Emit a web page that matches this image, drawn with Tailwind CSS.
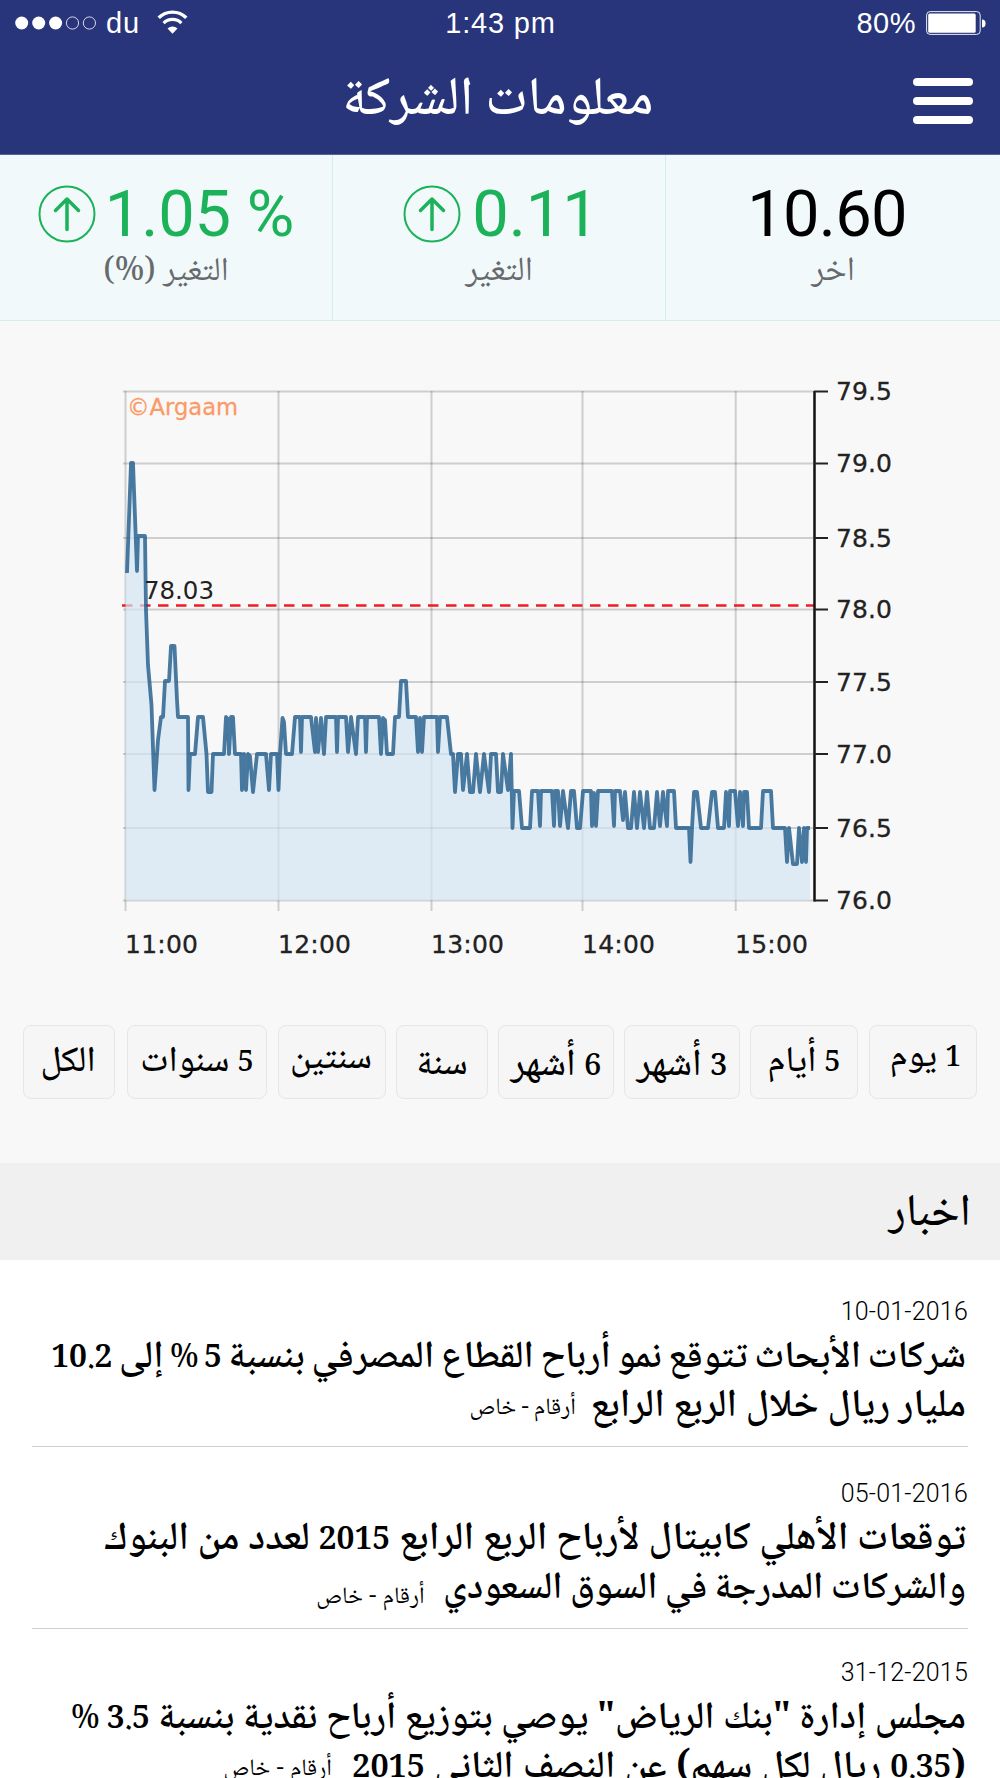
<!DOCTYPE html>
<html lang="ar">
<head>
  <meta charset="UTF-8" />
  <meta name="viewport" content="width=device-width, initial-scale=1.0"/>
  <title>معلومات الشركة</title>
  <script src="https://cdn.jsdelivr.net/npm/@tailwindcss/browser@4"></script>
</head>
<body class="bg-white">
  <div class="w-[1000px] h-[1778px] overflow-hidden bg-white font-['Noto_Naskh_Arabic','DejaVu_Sans',serif] text-black">

    <!-- Header -->
    <header class="h-[155px] bg-[#28357a] border-b border-[#5a6398] text-white">
      <div class="grid grid-cols-3 items-center h-[46px] pl-[15px] pr-[14px] font-['Liberation_Sans',sans-serif] text-[29px] leading-none">
        <div class="flex items-center">
          <svg class="w-[82px] h-[14px] -mt-[1px]" viewBox="0 0 82 14">
            <circle cx="6.7" cy="7" r="6.5" fill="#fff"/>
            <circle cx="23.7" cy="7" r="6.5" fill="#fff"/>
            <circle cx="40.6" cy="7" r="6.5" fill="#fff"/>
            <circle cx="57.5" cy="7" r="6.1" fill="none" stroke="#fff" stroke-width="0.8"/>
            <circle cx="74.4" cy="7" r="6.1" fill="none" stroke="#fff" stroke-width="0.8"/>
          </svg>
          <span class="ml-[9px] mt-[1px] tracking-[0.8px]">du</span>
          <svg class="ml-[17px] -mt-[2px] w-[31px] h-[24px]" viewBox="0 0 30 24">
            <path d="M1.2 7.800a19.500 19.500 0 0 1 27.600 0" fill="none" stroke="#fff" stroke-width="3.4"/>
            <path d="M6.1 13.100a12.700 12.700 0 0 1 17.800 0" fill="none" stroke="#fff" stroke-width="3.2"/>
            <path d="M15 23.800l-5-5.200a7.200 7.200 0 0 1 10 0z" fill="#fff"/>
          </svg>
        </div>
        <div class="text-center mt-[1px] tracking-[0.8px]">1:43 pm</div>
        <div class="flex items-center justify-end">
          <span class="mt-[1px] mr-[10px] tracking-[0.5px]">80%</span>
          <svg class="w-[60px] h-[24px] -mt-[1px]" viewBox="0 0 60 24">
            <rect x="0.6" y="0.6" width="53.6" height="22.8" rx="3.5" fill="none" stroke="#fff" stroke-width="0.9"/>
            <rect x="2.2" y="2.4" width="47.5" height="19.4" rx="1.5" fill="#fff"/>
            <path d="M56 8.500q3.600 0 3.600 4t-3.600 4z" fill="#fff"/>
          </svg>
        </div>
      </div>
      <div class="grid grid-cols-[60px_1fr_60px] items-center h-[108px] px-[27px]">
        <span></span>
        <h1 dir="rtl" class="text-[54px] leading-[60px] font-medium text-center whitespace-nowrap mt-[4px] mr-[4px]">معلومات الشركة</h1>
        <div class="flex flex-col gap-[11px] items-end mt-[2px]">
          <span class="w-[60px] h-[8px] rounded-full bg-white"></span>
          <span class="w-[60px] h-[8px] rounded-full bg-white"></span>
          <span class="w-[60px] h-[8px] rounded-full bg-white"></span>
        </div>
      </div>
    </header>

    <!-- Stats -->
    <section class="grid grid-cols-[333px_333px_334px] h-[166px] bg-[#f1f9fb] border-b border-[#d8ebec] text-center">
      <div class="border-r border-[#d5eced] pt-[21px]">
        <div class="flex items-center justify-center gap-[9px] text-[#1bb25a]">
          <svg class="w-[58px] h-[58px]" viewBox="0 0 58 58" fill="none" stroke="currentColor">
            <circle cx="29" cy="29" r="27.5" stroke-width="2"/>
            <path d="M29 44.500V14M17.500 25.500L29 14l11.500 11.500" stroke-width="3.500" stroke-linecap="round" stroke-linejoin="round"/>
          </svg>
          <span class="font-[Roboto] text-[65px] leading-[76px] tracking-[-0.2px]">1.05 %</span>
        </div>
        <p dir="rtl" class="text-[33px] leading-[40px] text-[#666a6c] mt-[1px]">التغير (%)</p>
      </div>
      <div class="border-r border-[#d5eced] pt-[21px]">
        <div class="flex items-center justify-center gap-[11px] pl-[4px] text-[#1bb25a]">
          <svg class="w-[58px] h-[58px]" viewBox="0 0 58 58" fill="none" stroke="currentColor">
            <circle cx="29" cy="29" r="27.5" stroke-width="2"/>
            <path d="M29 44.500V14M17.500 25.500L29 14l11.500 11.500" stroke-width="3.500" stroke-linecap="round" stroke-linejoin="round"/>
          </svg>
          <span class="font-[Roboto] text-[65px] leading-[76px]">0.11</span>
        </div>
        <p dir="rtl" class="text-[34px] leading-[40px] text-[#666a6c] mt-[1px]">التغير</p>
      </div>
      <div class="pt-[21px]">
        <div class="font-[Roboto] text-[65px] leading-[76px] tracking-[-0.8px] pr-[12px]">10.60</div>
        <p dir="rtl" class="text-[34px] leading-[40px] text-[#666a6c] mt-[1px]">اخر</p>
      </div>
    </section>

    <!-- Chart and ranges -->
    <section class="h-[842px] bg-[#f8f8f8]">
      <svg class="block w-[1000px] h-[704px]" viewBox="0 321 1000 704" font-family="DejaVu Sans">
        <g stroke="#000" stroke-opacity="0.17" stroke-width="2">
          <path d="M123 391.500H814M123 463.500H814M123 538H814M123 609.500H814M123 682H814M123 754H814M123 828H814M123 900.500H814"/>
          <path d="M125.500 391V911M278.500 391V911M431.500 391V911M582.500 391V911M735.700 391V911"/>
        </g>
        <text x="127" y="415" font-size="23.500" textLength="111" lengthAdjust="spacingAndGlyphs" fill="#fb9a66" stroke="#fb9a66" stroke-width="0.3">©Argaam</text>
        <path d="M122 605.500H814" stroke="#f01c24" stroke-width="2.400" stroke-dasharray="10.500 7.500"/>
        <path id="area" fill="#d3e6f2" fill-opacity="0.700"/>
        <path id="line" fill="none" stroke="#1f5a8a" stroke-opacity="0.800" stroke-width="3.800" stroke-linejoin="round"/>
        <text x="144" y="599" font-size="24.500" textLength="70" fill="#222">78.03</text>
        <path d="M814.500 391V901.500" stroke="#111" stroke-width="2.500"/>
        <path d="M814 391.500H828M814 463.500H828M814 538H828M814 609.500H828M814 682H828M814 754H828M814 828H828M814 900.500H828" stroke="#222" stroke-width="2"/>
        <g font-size="25" fill="#222" stroke="#222" stroke-width="0.3">
          <text x="836" y="400" textLength="56">79.5</text>
          <text x="836" y="472" textLength="56">79.0</text>
          <text x="836" y="546.500" textLength="56">78.5</text>
          <text x="836" y="618" textLength="56">78.0</text>
          <text x="836" y="690.500" textLength="56">77.5</text>
          <text x="836" y="762.500" textLength="56">77.0</text>
          <text x="836" y="836.500" textLength="56">76.5</text>
          <text x="836" y="909" textLength="56">76.0</text>
          <text x="125" y="953" textLength="73">11:00</text>
          <text x="278" y="953" textLength="73">12:00</text>
          <text x="431" y="953" textLength="73">13:00</text>
          <text x="582" y="953" textLength="73">14:00</text>
          <text x="735" y="953" textLength="73">15:00</text>
        </g>
      </svg>

      <div class="flex gap-[10px] pl-[23px] h-[74px] text-[36px] leading-[46px] font-medium text-center whitespace-nowrap">
        <div dir="rtl" class="w-[92px] pt-[15px] pr-[2px] rounded-lg border border-[#e6e6e6] bg-[#f6f6f6]">الكل</div>
        <div dir="rtl" class="w-[140px] ml-[2px] pt-[15px] rounded-lg border border-[#e6e6e6] bg-[#f6f6f6]"><span class="text-[29px]">5</span> سنوات</div>
        <div dir="rtl" class="w-[108px] ml-[1px] pt-[12px] pr-[2px] rounded-lg border border-[#e6e6e6] bg-[#f6f6f6]">سنتين</div>
        <div dir="rtl" class="w-[92px] pt-[18px] rounded-lg border border-[#e6e6e6] bg-[#f6f6f6]">سنة</div>
        <div dir="rtl" class="w-[116px] pt-[18px] rounded-lg border border-[#e6e6e6] bg-[#f6f6f6] text-[38px]"><span class="text-[31px]">6</span> أشهر</div>
        <div dir="rtl" class="w-[116px] pt-[18px] rounded-lg border border-[#e6e6e6] bg-[#f6f6f6] text-[38px]"><span class="text-[31px]">3</span> أشهر</div>
        <div dir="rtl" class="w-[108px] pt-[15px] rounded-lg border border-[#e6e6e6] bg-[#f6f6f6]"><span class="text-[29px]">5</span> أيام</div>
        <div dir="rtl" class="w-[108px] ml-[1px] pt-[10px] pl-[5px] rounded-lg border border-[#e6e6e6] bg-[#f6f6f6]"><span class="text-[29px]">1</span> يوم</div>
      </div>
    </section>

    <!-- News -->
    <section dir="rtl">
      <h2 class="h-[97px] pt-[21px] pr-[29px] bg-[#f0f0f0] text-[45px] leading-[64px] font-medium">اخبار</h2>
      <div class="px-[32px] whitespace-nowrap">
        <article class="h-[187px] pt-[37px] border-b border-[#cfcfcf]">
          <p dir="ltr" class="text-right font-[Roboto] font-light text-[25px] leading-[30px] tracking-[0.2px]">10-01-2016</p>
          <h3 class="mt-[8px] pr-[2px] text-[38px] leading-[48.500px] font-semibold">
            <div class="h-[48.500px] [word-spacing:-1.8px]">شركات الأبحاث تتوقع نمو أرباح القطاع المصرفي بنسبة <span class="text-[32px]">5 <span class="font-normal">%</span></span> إلى <span class="text-[32px]">10.2</span></div>
            <div class="h-[48.500px] text-[39px]">مليار ريال خلال الربع الرابع <span class="relative -top-[2px] text-[23.500px] font-normal mr-[6px]">أرقام - خاص</span></div>
          </h3>
        </article>
        <article class="h-[182px] pt-[32px] border-b border-[#cfcfcf]">
          <p dir="ltr" class="text-right font-[Roboto] font-light text-[25px] leading-[30px] tracking-[0.2px]">05-01-2016</p>
          <h3 class="mt-[8px] pr-[2px] text-[38px] leading-[48.500px] font-semibold">
            <div class="h-[48.500px] text-[39.500px]">توقعات الأهلي كابيتال لأرباح الربع الرابع <span class="text-[32px]">2015</span> لعدد من البنوك</div>
            <div class="h-[48.500px] [word-spacing:-1px]">والشركات المدرجة في السوق السعودي <span class="relative top-[5px] text-[23.500px] font-normal mr-[11px] [word-spacing:1px]">أرقام - خاص</span></div>
          </h3>
        </article>
        <article class="h-[182px] pt-[29px]">
          <p dir="ltr" class="text-right font-[Roboto] font-light text-[25px] leading-[30px] tracking-[0.2px]">31-12-2015</p>
          <h3 class="mt-[8px] pr-[2px] text-[38px] leading-[48.500px] font-semibold">
            <div class="h-[48.500px]">مجلس إدارة "بنك الرياض" يوصي بتوزيع أرباح نقدية بنسبة <span class="text-[32px]">3.5 <span class="font-normal">%</span></span></div>
            <div class="h-[48.500px] [word-spacing:1px]">(<span class="text-[32px]">0.35</span> ريال لكل سهم) عن النصف الثاني <span class="text-[32.500px]">2015</span> <span class="relative -top-[2px] text-[23.500px] font-normal mr-[11px]">أرقام - خاص</span></div>
          </h3>
        </article>
      </div>
    </section>
  </div>

  <script>
    // intraday prices as x,y pairs in chart units
    const points = [
      [127,573],[131,463],[133,463],[137,571],[138,536],[145,536],[146,610],[148,665],[151.5,705],[154.5,790],
      [158,740],[161,717],[163,717],[165,681],[169,681],[171,646],[174.5,646],[177,700],[178,717],[188,717],
      [188.5,790],[190,754],[195,754],[198,717],[203,717],[206.5,754],[208,792],[211.5,792],[213,754],[224,754],
      [226,717],[228,719],[229,754],[231,717],[233,717],[235,754],[241,754],[242,790],[244,754],[246,790],
      [248,754],[250,756],[253,792],[257,754],[266,754],[269,790],[271,754],[277,754],[278.5,790],[280,754],
      [282.5,718],[284,722],[286,754],[292,754],[295,717],[300,717],[301,752],[302,717],[311,717],[315,752],
      [316,718],[318,752],[321,718],[324,754],[326,717],[336,717],[337,752],[338,717],[346,717],[348,752],
      [351,717],[356,754],[358,717],[365,717],[366,752],[367,717],[379,717],[381,754],[383,718],[385,720],
      [387,754],[393,754],[395,717],[399,717],[401,681],[406,681],[408,717],[416,717],[418,752],[420,718],
      [422,752],[424,717],[437,717],[438,752],[440,717],[447,717],[451,754],[453,754],[455,792],[458,754],
      [461,754],[463,790],[467,754],[470,792],[473,792],[476,754],[480,792],[484,754],[489,792],[491,754],
      [496,754],[498,792],[501,792],[503,754],[508,790],[511,754],[512.5,828],[514,791],[519,791],[522,828],
      [530,828],[532,791],[538,791],[540,826],[541,791],[552,791],[554,826],[555,791],[558,791],[560,826],
      [563,791],[568,828],[571,791],[574,791],[577,828],[580,828],[583,791],[591,791],[592,826],[594,793],
      [596,826],[598,791],[612,791],[614,826],[615,791],[620,791],[623,820],[625,792],[628,828],[631,828],
      [634,792],[637,828],[640,792],[644,828],[647,792],[650,828],[654,828],[657,792],[660,826],[663,792],
      [667,826],[668,791],[674,791],[676,828],[689,828],[690.5,862],[692,828],[694,792],[697,792],[701,828],
      [708,828],[712,792],[715,792],[718,828],[724,828],[726,792],[729,826],[730,791],[735,791],[738,826],
      [740,792],[743,826],[744,792],[747,792],[749,828],[761,828],[763,791],[771,791],[773,828],[785,828],
      [787,862],[789,828],[793,864],[797,864],[799,828],[802,862],[804,828],[806,862],[807,828],[810,828]
    ];
    const d = 'M' + points.map(p => p.join(' ')).join('L');
    document.getElementById('line').setAttribute('d', d);
    document.getElementById('area').setAttribute('d', d + 'V900.5H125.5V573Z');
  </script>
</body>
</html>
